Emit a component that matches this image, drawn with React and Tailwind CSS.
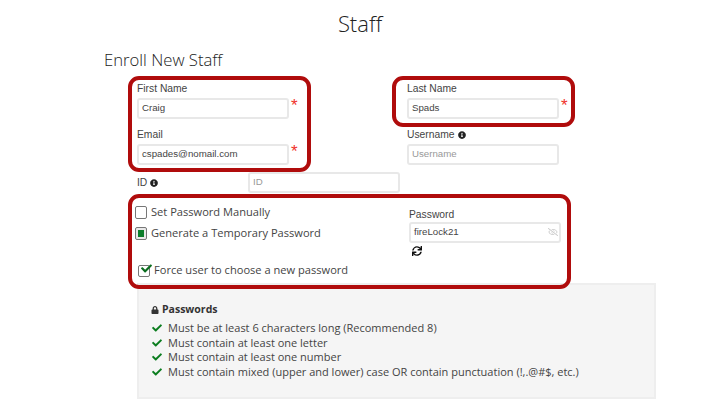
import React from "react";
import { FaInfoCircle, FaCheck, FaLock, FaSync, FaRegEyeSlash } from "react-icons/fa";

const sans = "font-['Liberation_Sans',Arial,sans-serif]";

function Input({ value, placeholder, className = "" }) {
  return (
    <div className={`w-[152px] h-[21px] rounded-[3px] border-2 border-[#e8e8e8] bg-white pl-[3px] flex items-center text-[9.7px] ${sans} ${value ? "text-[#444]" : "text-[#999]"} ${className}`}>
      {value || placeholder}
    </div>
  );
}

function Field({ label, info, value, placeholder, required }) {
  return (
    <div className="w-[165px]">
      <div className={`h-[21px] pt-[3px] flex items-center gap-[3px] text-[10.3px] text-[#444] ${sans}`}>
        {label}
        {info && <FaInfoCircle className="w-[8px] h-[8px] text-[#222]" />}
      </div>
      <div className="flex items-start">
        <Input value={value} placeholder={placeholder} />
        {required && <span className={`ml-[2px] text-[17px] leading-[15px] text-[#f0322d] ${sans}`}>*</span>}
      </div>
    </div>
  );
}

function Rule({ children }) {
  return (
    <li className="flex items-center h-[14.6px] gap-[5px]">
      <FaCheck className="w-[12px] h-[10px] text-[#0b7d1f]" />
      <span>{children}</span>
    </li>
  );
}

const ring = "absolute border-[4px] border-[#b00c0c] rounded-[11px] pointer-events-none";

export default function App() {
  return (
    <div className="relative w-[720px] h-[406px] overflow-hidden bg-white font-['Open_Sans',sans-serif] text-[#333]">
      <h1 className="h-[47px] flex items-center justify-center text-[22px] font-light text-[#222]">Staff</h1>
      <h2 className="pl-[104px] h-[25px] flex items-center text-[16.7px] font-light text-[#222]">Enroll New Staff</h2>

      <div className="pl-[137px] pt-[5px]">
        <div className="flex">
          <div className="w-[270px]">
            <Field label="First Name" value="Craig" required />
            <div className="h-[4px]" />
            <Field label="Email" value="cspades@nomail.com" required />
          </div>
          <div>
            <Field label="Last Name" value="Spads" required />
            <div className="h-[4px]" />
            <Field label="Username" info placeholder="Username" />
          </div>
        </div>

        <div className="flex items-center h-[21px] mt-[7px]">
          <div className={`w-[111px] flex items-center gap-[3px] text-[10.3px] text-[#444] ${sans}`}>
            ID <FaInfoCircle className="w-[8px] h-[8px] text-[#222]" />
          </div>
          <Input placeholder="ID" />
        </div>

        <div className="flex h-[88px] mt-[3px]">
          <div className="w-[274px] -ml-[2px] text-[11.1px] text-[#444]">
            <div className="flex items-center gap-[4px] h-[21px] mt-[6px]">
              <span className="w-[12px] h-[13px] rounded-[2px] border border-[#777] bg-white" />
              Set Password Manually
            </div>
            <div className="flex items-center gap-[4px] h-[21px]">
              <span className="w-[12px] h-[13px] rounded-[2px] border border-[#777] bg-[#e8e8e8] p-[2px] flex">
                <span className="flex-1 bg-[#0b7d2a]" />
              </span>
              Generate a Temporary Password
            </div>
            <div className="relative flex items-center gap-[4px] h-[21px] mt-[16px] pl-[3px]">
              <span className="w-[12px] h-[12px] rounded-[2px] border border-[#777] bg-white" />
              <FaCheck className="absolute left-[5px] top-[3px] w-[13px] h-[11px] text-[#0b6d1f]" />
              Force user to choose a new password
            </div>
          </div>
          <div className="pt-[6px]">
            <div className={`h-[20px] text-[10.3px] leading-[26px] text-[#444] ${sans}`}>Password</div>
            <div className="relative">
              <Input value="fireLock21" className="h-[20px]" />
              <FaRegEyeSlash className="absolute right-[3px] top-[5px] w-[10px] h-[10px] text-[#c8c8c8]" />
            </div>
            <FaSync className="ml-[3px] mt-[3px] w-[10px] h-[10px] text-[#111]" />
          </div>
        </div>

        <div className="w-[519px] h-[116px] -mt-[1px] border-2 border-[#eeeeee] bg-[#f5f5f5] pl-[12px] pt-[17px] text-[11px] text-[#444]">
          <div className="flex items-center gap-[3px] h-[16px] text-[10.5px] font-bold text-[#333]">
            <FaLock className="w-[8px] h-[8px]" />
            Passwords
          </div>
          <ul className="mt-[3px]">
            <Rule>Must be at least 6 characters long (Recommended 8)</Rule>
            <Rule>Must contain at least one letter</Rule>
            <Rule>Must contain at least one number</Rule>
            <Rule>Must contain mixed (upper and lower) case OR contain punctuation (!,.@#$, etc.)</Rule>
          </ul>
        </div>
      </div>

      <div className={`${ring} left-[128px] top-[76px] w-[183px] h-[96px]`} />
      <div className={`${ring} left-[392px] top-[76px] w-[183px] h-[51px]`} />
      <div className={`${ring} left-[128px] top-[194px] w-[443px] h-[95px]`} />
    </div>
  );
}
